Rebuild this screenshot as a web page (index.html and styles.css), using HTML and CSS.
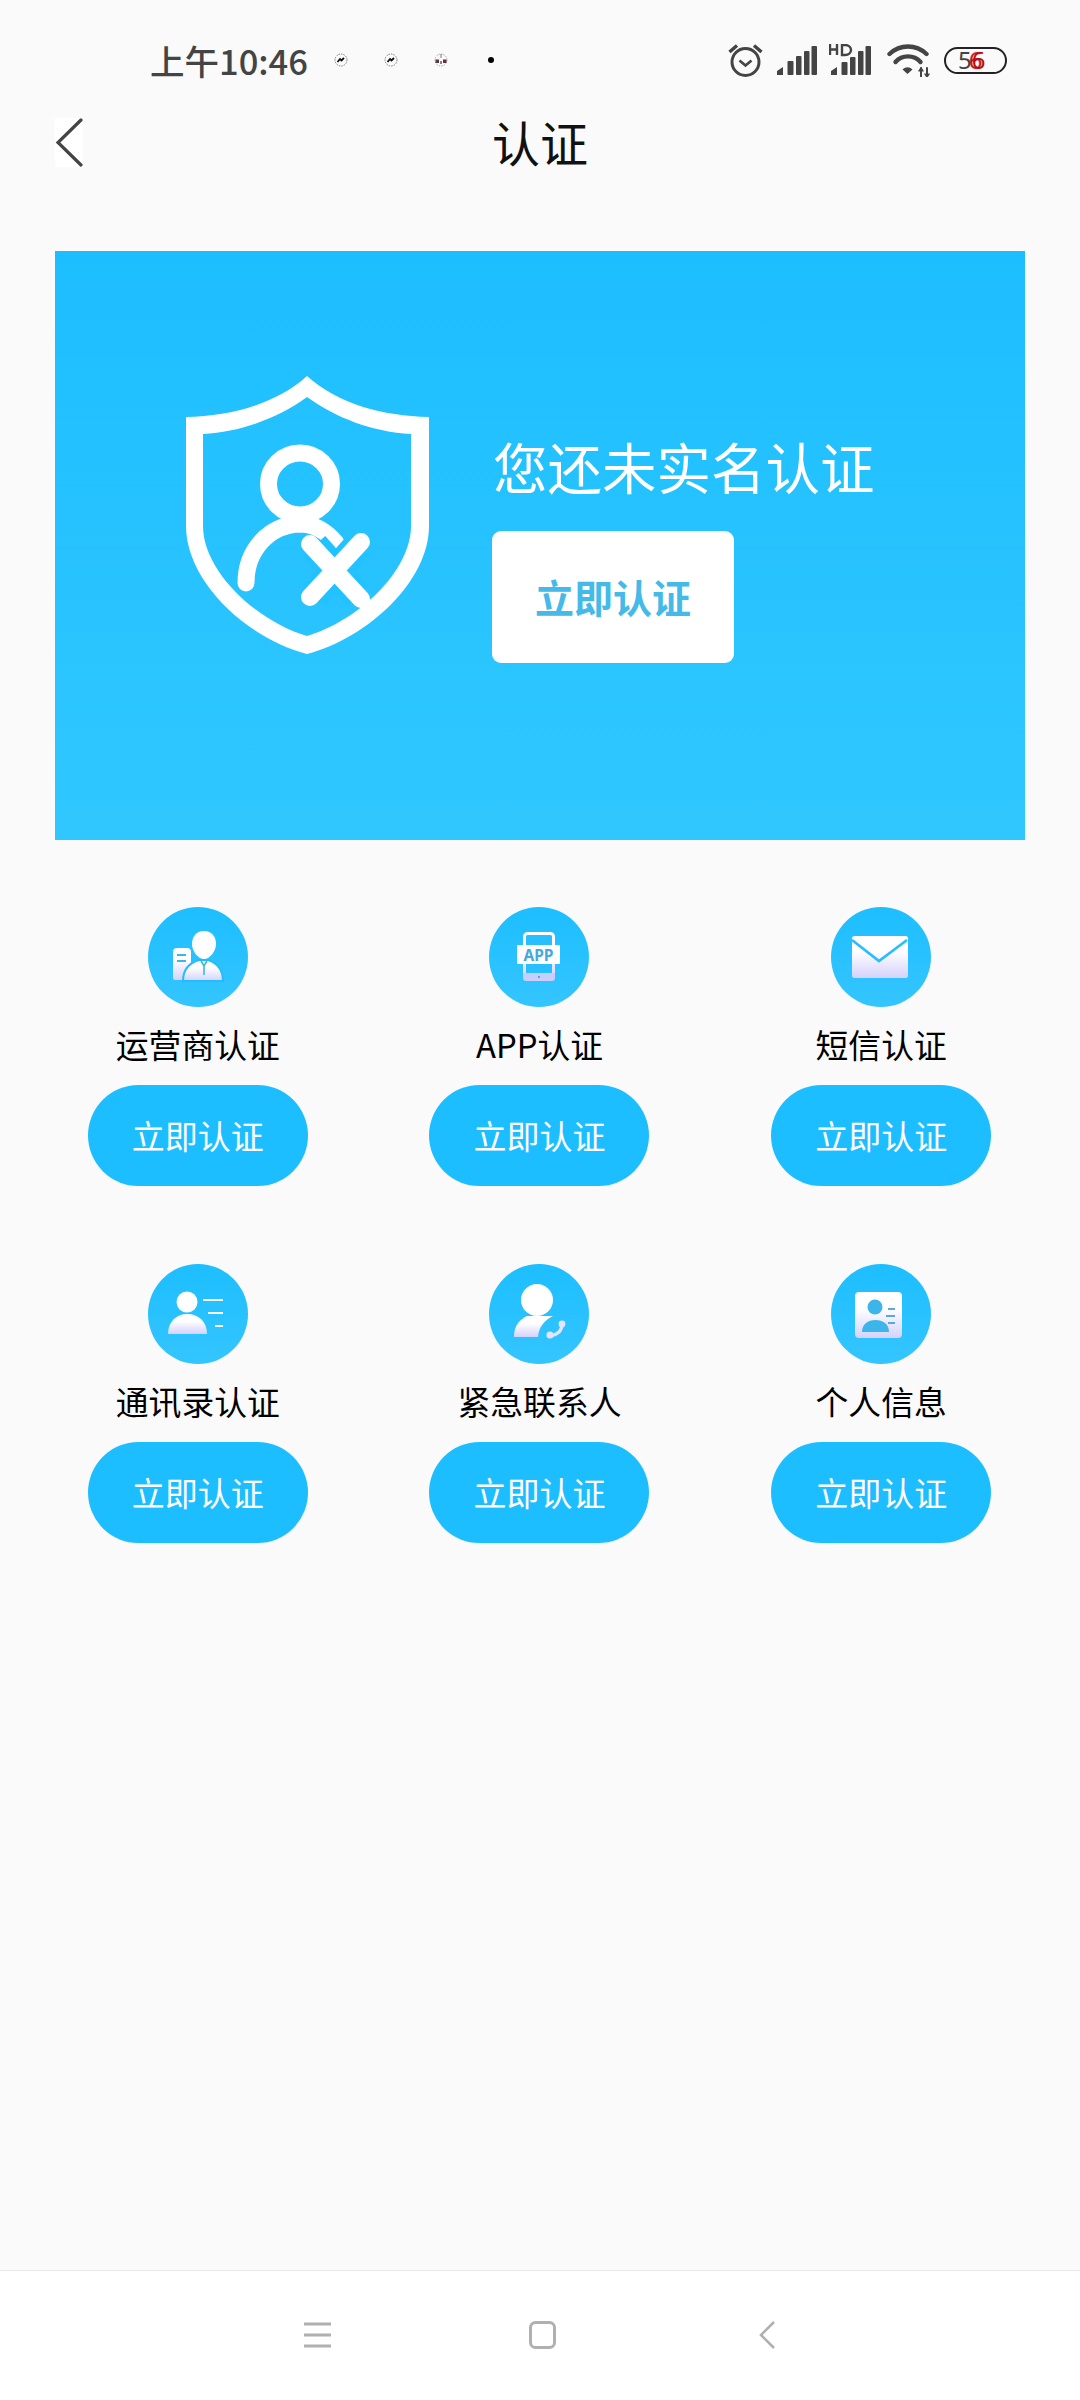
FILE: index.html

```html
<!DOCTYPE html>
<html lang="zh-CN">
<head>
  <meta charset="UTF-8">
  <title>认证</title>
  <link rel="stylesheet" href="styles.css">
</head>
<body>
  <svg class="defs" width="0" height="0">
    <defs>
      <linearGradient id="fade" x1="0" y1="0" x2="0" y2="1">
        <stop offset="0.35" stop-color="#ffffff"/>
        <stop offset="1" stop-color="#d5d2fb"/>
      </linearGradient>
      <linearGradient id="disc" x1="0" y1="0" x2="0" y2="1">
        <stop offset="0" stop-color="#1dbeff"/>
        <stop offset="1" stop-color="#34c5ff"/>
      </linearGradient>
    </defs>
  </svg>

  <div class="phone">
    <div class="status">
      <span class="time">上午10:46</span>
      <div class="notes">
        <svg class="note" viewBox="0 0 14 14"><circle cx="7" cy="7" r="6" fill="none" stroke="#666" stroke-width="0.8" stroke-dasharray="1.5 1"/><path d="M3.5 9 L6 6 L7.5 7.5 L10 5" fill="none" stroke="#111" stroke-width="1.8"/></svg>
        <svg class="note" viewBox="0 0 14 14"><circle cx="7" cy="7" r="6" fill="none" stroke="#666" stroke-width="0.8" stroke-dasharray="1.5 1"/><path d="M3.5 9 L6 6 L7.5 7.5 L10 5" fill="none" stroke="#111" stroke-width="1.8"/></svg>
        <svg class="note" viewBox="0 0 14 14"><circle cx="7" cy="7" r="6" fill="none" stroke="#999" stroke-width="0.8" stroke-dasharray="1.5 1"/><path d="M7 1 V5" stroke="#555" stroke-width="0.8"/><rect x="1.5" y="6.5" width="3.5" height="3.5" fill="#5b3a44"/><rect x="9" y="6.5" width="3.5" height="3.5" fill="#6b2b3a"/><rect x="6.3" y="8" width="1.4" height="3" fill="#555"/></svg>
        <span class="dot"></span>
      </div>
      <div class="sys">
        <svg class="alarm" viewBox="0 0 35 34" fill="none" stroke="#444">
          <circle cx="17.5" cy="19" r="13.5" stroke-width="3"/>
          <path d="M11.5 17.5 L17.5 22.5 L23.5 17.5" stroke-width="2.6"/>
          <path d="M1.5 9 L9 2.5 M33.5 9 L26 2.5" stroke-width="3.4"/>
        </svg>
        <svg class="signal" viewBox="0 0 40 29" fill="#444">
          <path d="M0 29 V25 L6 21 V29Z"/>
          <rect x="10.5" y="15" width="6" height="14" rx="1"/>
          <rect x="19" y="10" width="5.5" height="19" rx="1"/>
          <rect x="27" y="5" width="5.5" height="24" rx="1"/>
          <rect x="34.5" y="0" width="5.5" height="29" rx="1"/>
        </svg>
        <svg class="signal-hd" viewBox="0 0 42 31" fill="#444">
          <path d="M2 31 V27 L8 23 V31Z"/>
          <rect x="12.5" y="18" width="6" height="13" rx="1"/>
          <rect x="21" y="13" width="5.5" height="18" rx="1"/>
          <rect x="29" y="7" width="5.5" height="24" rx="1"/>
          <rect x="36.5" y="2" width="5.5" height="29" rx="1"/>
          <path d="M1 0 V11 M8 0 V11 M1 5.5 H8" fill="none" stroke="#444" stroke-width="2.4"/>
          <path d="M13 1 H16 C24 1 24 11 16 11 H13Z" fill="none" stroke="#444" stroke-width="2.4"/>
        </svg>
        <svg class="wifi" viewBox="0 0 43 33" fill="none" stroke="#444" stroke-linecap="round">
          <path d="M2.5 10 C13 0 29 0 39.5 10" stroke-width="4.4"/>
          <path d="M8.5 18 C15 10.5 27 10.5 33.5 18" stroke-width="4.4"/>
          <path d="M15.5 25.5 L20.5 30 L25.5 25.5 C22 22.5 19 22.5 15.5 25.5Z" fill="#444" stroke="none"/>
          <path d="M34 24 V33 M40 24 V33" stroke-width="2"/>
          <path d="M32 27 L34 24 L36 27 M38 30 L40 33 L42 30" stroke-width="1.4"/>
        </svg>
        <div class="battery"><span>5</span><span class="low">6</span></div>
      </div>
    </div>

    <div class="topbar">
      <svg class="back" viewBox="0 0 28 49"><path d="M26 2 L3 24.5 L26 47" fill="none" stroke="#444" stroke-width="3.2" stroke-linecap="round"/></svg>
      <h1>认证</h1>
    </div>

    <div class="main">
      <div class="banner">
        <svg class="shield" viewBox="0 0 243 278">
          <path fill="#fff" fill-rule="evenodd" d="M121 0 C90 28 45 40 0 41 V150 C0 205 60 262 121 278 C182 262 243 205 243 150 V41 C197 40 152 28 121 0Z M121 21 C92 42 55 56 17 58 V150 C17 195 70 245 121 260 C172 245 225 195 225 150 V58 C187 56 150 42 121 21Z"/>
          <ellipse cx="114" cy="108" rx="31.5" ry="31" fill="none" stroke="#fff" stroke-width="17"/>
          <path d="M60 207 C60 175 82 149 114 148 C128 148 140 155 150 167" fill="none" stroke="#fff" stroke-width="17" stroke-linecap="round"/>
          <path d="M128 170 L172 220 M172 170 L128 220" stroke="#22c1ff" stroke-width="30"/>
          <path d="M124 168 L175 223 M175 166 L124 221" stroke="#fff" stroke-width="18" stroke-linecap="round"/>
        </svg>
        <div class="banner-side">
          <div class="banner-title">您还未实名认证</div>
          <button class="banner-btn">立即认证</button>
        </div>
      </div>

      <div class="grid">
        <div class="cell">
          <svg class="badge" viewBox="0 0 100 100">
            <circle cx="50" cy="50" r="50" fill="url(#disc)"/>
            <path fill="url(#fade)" d="M25 45 Q25 41 29 41 H39 Q43 41 43 45 V73 H27 Q25 73 25 71Z"/>
            <path d="M29 48 H38 M29 54 H38" stroke="#3cb6ea" stroke-width="2"/>
            <path fill="url(#fade)" stroke="#22bdff" stroke-width="2" d="M35 74 C35 62 41 56 51 53 H60 C69 56 75 62 75 74Z"/>
            <path fill="#fff" d="M56 24 C64 24 68 30 68 37 C68 44 62 52 56 52 C50 52 44 44 44 37 C44 30 48 24 56 24Z"/>
            <path d="M53 54 L56 59 L59 54 M56 59 V68" fill="none" stroke="#3cb6ea" stroke-width="1.6"/>
          </svg>
          <div class="label">运营商认证</div>
          <button class="go">立即认证</button>
        </div>

        <div class="cell">
          <svg class="badge" viewBox="0 0 100 100">
            <circle cx="50" cy="50" r="50" fill="url(#disc)"/>
            <rect x="35.5" y="26.5" width="29" height="46" rx="3" fill="#28bfff" stroke="url(#fade)" stroke-width="3"/>
            <path d="M34 66 H66 V71 Q66 74 63 74 H37 Q34 74 34 71Z" fill="#c9cffc"/>
            <circle cx="50" cy="70" r="1" fill="#3c8fd0"/>
            <rect x="28" y="38" width="43" height="19" rx="1" fill="#fff"/>
            <text class="badge-app" x="49.5" y="53.5" text-anchor="middle">APP</text>
          </svg>
          <div class="label">APP认证</div>
          <button class="go">立即认证</button>
        </div>

        <div class="cell">
          <svg class="badge" viewBox="0 0 100 100">
            <circle cx="50" cy="50" r="50" fill="url(#disc)"/>
            <rect x="21" y="29" width="56" height="42" rx="2.5" fill="url(#fade)"/>
            <path d="M21 33 L48 54 L76 33" fill="none" stroke="#26beff" stroke-width="2.6"/>
          </svg>
          <div class="label">短信认证</div>
          <button class="go">立即认证</button>
        </div>

        <div class="cell">
          <svg class="badge" viewBox="0 0 100 100">
            <circle cx="50" cy="50" r="50" fill="url(#disc)"/>
            <circle cx="39" cy="38" r="10.5" fill="#fff"/>
            <path fill="url(#fade)" d="M20 70 C20 58 28 50 39 50 C51 50 59 58 59 70Z"/>
            <path d="M55 36 H75 M60 49 H75 M67 62 H75" stroke="#fff" stroke-width="2"/>
          </svg>
          <div class="label">通讯录认证</div>
          <button class="go">立即认证</button>
        </div>

        <div class="cell">
          <svg class="badge" viewBox="0 0 100 100">
            <circle cx="50" cy="50" r="50" fill="url(#disc)"/>
            <path fill="url(#fade)" d="M25 73 C25 62 30 56 38 52 H64 C56 56 50 62 49 73Z"/>
            <ellipse cx="48" cy="36" rx="16" ry="16" fill="#fff"/>
            <path d="M73 60 C73 67 68 71 61 72" fill="none" stroke="#e4e3fc" stroke-width="3.4"/>
            <circle cx="73" cy="60" r="3.4" fill="#e4e3fc"/>
            <circle cx="61" cy="71" r="3.6" fill="#e4e3fc"/>
          </svg>
          <div class="label">紧急联系人</div>
          <button class="go">立即认证</button>
        </div>

        <div class="cell">
          <svg class="badge" viewBox="0 0 100 100">
            <circle cx="50" cy="50" r="50" fill="url(#disc)"/>
            <rect x="24" y="28" width="47" height="46" rx="4" fill="url(#fade)"/>
            <circle cx="44" cy="43" r="7.5" fill="#3cb6ea"/>
            <path fill="#3cb6ea" d="M31 68 C31 60 37 56 44.5 56 C52 56 58 60 58 68Z"/>
            <path d="M57 45 H64 M55 52 H64 M57 59 H64" stroke="#5aa9dc" stroke-width="2"/>
          </svg>
          <div class="label">个人信息</div>
          <button class="go">立即认证</button>
        </div>
      </div>
    </div>

    <div class="navbar">
      <svg class="nav-icon" viewBox="0 0 27 28"><path d="M0 3 H27 M0 14 H27 M0 25 H27" stroke="#b0b0b0" stroke-width="3"/></svg>
      <svg class="nav-icon" viewBox="0 0 27 28"><rect x="1.5" y="1.5" width="24" height="25" rx="5" fill="none" stroke="#b0b0b0" stroke-width="3"/></svg>
      <svg class="nav-icon" viewBox="0 0 27 28"><path d="M20 1 L7 14 L20 27" fill="none" stroke="#b0b0b0" stroke-width="2.6"/></svg>
    </div>
  </div>
</body>
</html>
```

FILE: styles.css

```css
* {
  box-sizing: border-box;
}
body {
  margin: 0;
  background-color: #fafafa;
  font-family: "Noto Sans CJK SC", "Noto Sans", sans-serif;
}
.defs {
  display: block;
}
.phone {
  display: flex;
  flex-direction: column;
  height: 2400px;
}

/* status bar */
.status {
  display: flex;
  align-items: center;
  height: 100px;
  padding: 20px 73px 0 150px;
}
.time {
  width: 156px;
  font-size: 34.5px;
  font-weight: 500;
  line-height: 40px;
  color: #444;
  white-space: nowrap;
}
.notes {
  display: flex;
  align-items: center;
  gap: 36px;
  margin-left: 28px;
}
.note {
  width: 14px;
  height: 14px;
}
.dot {
  width: 6px;
  height: 6px;
  margin-left: 4px;
  border-radius: 50%;
  background-color: #000;
}
.sys {
  display: flex;
  align-items: center;
  gap: 14px;
  margin-left: auto;
}
.alarm {
  width: 35px;
  height: 34px;
}
.signal {
  width: 40px;
  height: 29px;
}
.signal-hd {
  width: 42px;
  height: 31px;
  margin: -2px 2px 0 -2px;
}
.wifi {
  width: 43px;
  height: 33px;
}
.battery {
  display: flex;
  align-items: center;
  width: 63px;
  height: 27px;
  padding-left: 12px;
  border: 2.5px solid #222;
  border-radius: 14px;
  font-family: "Noto Sans", sans-serif;
  font-size: 24px;
  line-height: 22px;
  color: #444;
}
.low {
  color: #b50d0d;
  text-shadow: -3px 0 1px #c00000;
}

/* title */
.topbar {
  display: grid;
  grid-template-columns: 1fr auto 1fr;
  align-items: center;
  height: 88px;
  padding: 0 55px;
}
.back {
  width: 28px;
  height: 49px;
  margin-top: -3px;
  background-color: #fff;
}
.topbar h1 {
  margin: -6px 0 0;
  font-size: 48px;
  font-weight: 400;
  line-height: 60px;
  color: #111;
}

/* banner */
.main {
  flex: 1;
}
.banner {
  display: flex;
  align-items: flex-start;
  gap: 62px;
  height: 589px;
  margin: 63px 55px 0;
  padding: 125px 0 0 131px;
  background: linear-gradient(#1dbeff, #30c7ff);
}
.shield {
  width: 243px;
  height: 278px;
  flex-shrink: 0;
}
.banner-side {
  margin-top: 60px;
}
.banner-title {
  margin-left: 2px;
  font-size: 54.5px;
  line-height: 60px;
  color: #fff;
  white-space: nowrap;
}
.banner-btn {
  display: block;
  width: 242px;
  height: 132px;
  margin: 35px 0 0 1px;
  padding-bottom: 3px;
  border: none;
  border-radius: 9px;
  background-color: #fff;
  font-family: inherit;
  font-size: 39px;
  font-weight: 700;
  color: #45bae8;
}

/* grid of checks */
.grid {
  display: grid;
  grid-template-columns: repeat(3, 1fr);
  row-gap: 78px;
  margin-top: 67px;
  padding: 0 28px 0 27px;
}
.cell {
  display: flex;
  flex-direction: column;
  align-items: center;
}
.badge {
  width: 100px;
  height: 100px;
}
.badge-app {
  font-family: "Noto Sans", sans-serif;
  font-size: 15.5px;
  font-weight: 700;
  fill: #46a8dc;
}
.label {
  margin: 15px 0 3px;
  font-size: 32.8px;
  line-height: 44px;
  color: #000;
}
.go {
  width: 220px;
  height: 101px;
  margin-top: 16px;
  padding-bottom: 3px;
  border: none;
  border-radius: 51px;
  background-color: #1dbeff;
  font-family: inherit;
  font-size: 33px;
  color: #fff;
}

/* bottom nav */
.navbar {
  display: flex;
  align-items: center;
  justify-content: center;
  gap: 198px;
  height: 130px;
  padding: 0 0 2px 4px;
  border-top: 1px solid #e8e8e8;
  background-color: #fff;
}
.nav-icon {
  width: 27px;
  height: 28px;
}
```
